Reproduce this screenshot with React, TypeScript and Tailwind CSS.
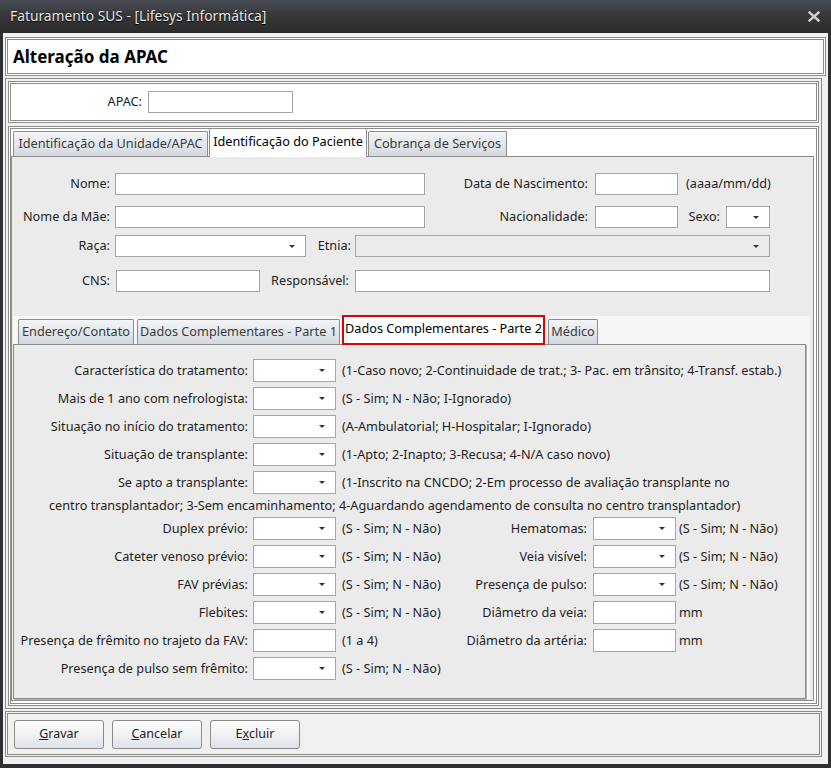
import React from "react";

const Input = ({ className = "", disabled = false }: { className?: string; disabled?: boolean }) => (
  <div className={`h-[22px] shrink-0 border border-[#a5a5a5] ${disabled ? "bg-[#ebebeb]" : "bg-white"} ${className}`} />
);

const Select = ({ className = "", disabled = false }: { className?: string; disabled?: boolean }) => (
  <div
    className={`flex h-[22px] shrink-0 items-center justify-end border border-[#a5a5a5] pr-[10px] ${
      disabled ? "bg-[#ebebeb]" : "bg-white"
    } ${className}`}
  >
    <svg width="6" height="3" viewBox="0 0 6 3">
      <path d="M0 0h6L3 3z" fill="#333" />
    </svg>
  </div>
);

const Label = ({ className = "", children }: { className?: string; children: React.ReactNode }) => (
  <span className={`shrink-0 whitespace-nowrap text-right ${className}`}>{children}</span>
);

const Btn = ({ pre, key1, post }: { pre?: string; key1: string; post: string }) => (
  <button className="flex h-[29px] w-[90px] items-center justify-center rounded-[3px] border border-[#8a8a8a] bg-[linear-gradient(to_bottom,#fdfdfd,#f1f3f5_45%,#dde3ea)] text-[12.5px] text-[#222]">
    {pre}
    <span className="underline">{key1}</span>
    {post}
  </button>
);

// linha com combo + legenda, coluna da esquerda
const Row = ({ label, desc, text = false }: { label: string; desc: string; text?: boolean }) => (
  <div className="flex h-[23px] items-center">
    <Label className="w-[234px]">{label}</Label>
    {text ? <Input className="ml-[5px] h-[23px] w-[83px]" /> : <Select className="ml-[5px] h-[23px] w-[83px]" />}
    <span className="ml-[6px] whitespace-nowrap">{desc}</span>
  </div>
);

const RowR = ({ label, desc, text = false }: { label: string; desc: string; text?: boolean }) => (
  <div className="flex h-[23px] items-center">
    <Label className="w-[137px]">{label}</Label>
    {text ? <Input className="ml-[6px] h-[23px] w-[83px]" /> : <Select className="ml-[6px] h-[23px] w-[83px]" />}
    <span className="ml-[3px] whitespace-nowrap">{desc}</span>
  </div>
);

const sn = "(S - Sim; N - Não)";

export default function App() {
  return (
    <div className="flex h-[768px] w-[831px] flex-col bg-[#2e3034] px-[3px] pb-[4px] font-['Noto_Sans',sans-serif] text-[12.7px] text-[#1e1e1e]">
      {/* barra de titulo */}
      <div className="-mx-[3px] flex h-[33px] shrink-0 items-center justify-between bg-[linear-gradient(to_bottom,#474a52_0px,#3d4047_10px,#3a3a3b_11px,#2b2b2c_100%)] pl-[10px] pr-[11px]">
        <span className="text-[13.8px] text-[#e6e6e6] [text-shadow:0_1px_1px_#000]">Faturamento SUS - [Lifesys Informática]</span>
        <svg width="12" height="11" viewBox="0 0 12 11">
          <path d="M1.5 1.5l9 8M10.5 1.5l-9 8" stroke="#d0d0d0" strokeWidth="2.4" strokeLinecap="square" />
        </svg>
      </div>

      <div className="flex flex-1 flex-col bg-[#f0f0f0] pl-[2px] pr-[2px] pt-[4px]">
        {/* cabecalho */}
        <div className="flex h-[39px] items-center border-[3px] border-double border-[#8c8c8c] bg-white pl-[5px]">
          <span className="text-[17px] font-bold text-black">Alteração da APAC</span>
        </div>

        {/* painel principal */}
        <div className="mr-[4px] mt-[2px] flex h-[631px] flex-col gap-[3px] border border-[#8c8c8c] p-[2px]">
          <div className="flex h-[42px] shrink-0 items-center border-[3px] border-double border-[#8c8c8c] bg-white">
            <Label className="w-[131px]">APAC:</Label>
            <Input className="ml-[6px] h-[21px] w-[145px]" />
          </div>

          <div className="flex flex-1 flex-col border-[3px] border-double border-[#8c8c8c] bg-white">
            {/* abas externas */}
            <div className="flex h-[27px] shrink-0 items-end pl-[2px]">
              <div className="flex h-[25px] w-[195px] items-center justify-center rounded-t-[2px] border border-b-0 border-[#8c8c8c] bg-[linear-gradient(to_bottom,#f3f5f7,#d3d9e0)] text-[#3a3a3a]">
                Identificação da Unidade/APAC
              </div>
              <div className="relative z-10 -mb-px ml-px flex h-[29px] w-[158px] items-center justify-center rounded-t-[2px] border border-b-0 border-[#8c8c8c] bg-white pb-[3px] text-black">
                Identificação do Paciente
              </div>
              <div className="ml-px flex h-[25px] w-[139px] items-center justify-center rounded-t-[2px] border border-b-0 border-[#8c8c8c] bg-[linear-gradient(to_bottom,#f3f5f7,#d3d9e0)] text-[#3a3a3a]">
                Cobrança de Serviços
              </div>
            </div>

            {/* conteudo da aba Paciente */}
            <div className="mb-[2px] mr-[2px] flex flex-1 flex-col border border-[#8c8c8c] bg-[#ebebeb] pt-[16px]">
              <div className="flex h-[22px] items-center">
                <Label className="w-[98px]">Nome:</Label>
                <Input className="ml-[5px] w-[310px]" />
                <Label className="w-[163px]">Data de Nascimento:</Label>
                <Input className="ml-[7px] w-[83px]" />
                <span className="ml-[8px]">(aaaa/mm/dd)</span>
              </div>
              <div className="mt-[11px] flex h-[22px] items-center">
                <Label className="w-[98px]">Nome da Mãe:</Label>
                <Input className="ml-[5px] w-[310px]" />
                <Label className="w-[163px]">Nacionalidade:</Label>
                <Input className="ml-[7px] w-[83px]" />
                <Label className="w-[42px]">Sexo:</Label>
                <Select className="ml-[6px] w-[44px]" />
              </div>
              <div className="mt-[7px] flex h-[22px] items-center">
                <Label className="w-[98px]">Raça:</Label>
                <Select className="ml-[5px] w-[191px]" />
                <Label className="w-[45px]">Etnia:</Label>
                <Select className="ml-[4px] w-[415px]" disabled />
              </div>
              <div className="mt-[13px] flex h-[22px] items-center">
                <Label className="w-[98px]">CNS:</Label>
                <Input className="ml-[6px] w-[144px]" />
                <Label className="w-[89px]">Responsável:</Label>
                <Input className="ml-[6px] w-[415px]" />
              </div>

              {/* abas internas */}
              <div className="mb-px ml-px mr-[3px] mt-[24px] flex flex-1 flex-col bg-[#f6f6f6]">
                <div className="flex h-[28px] shrink-0 items-end pl-[5px]">
                  <div className="flex h-[25px] w-[116px] items-center justify-center rounded-t-[2px] border border-b-0 border-[#8c8c8c] bg-[linear-gradient(to_bottom,#f3f5f7,#d3d9e0)] text-[#3a3a3a]">
                    Endereço/Contato
                  </div>
                  <div className="ml-[3px] flex h-[25px] w-[203px] items-center justify-center rounded-t-[2px] border border-b-0 border-[#8c8c8c] bg-[linear-gradient(to_bottom,#f3f5f7,#d3d9e0)] text-[#3a3a3a]">
                    Dados Complementares - Parte 1
                  </div>
                  <div className="relative z-10 -mb-px ml-[2px] flex h-[30px] w-[203px] items-center justify-center border-2 border-[#e00000] bg-white pb-[2px] text-black">
                    Dados Complementares - Parte 2
                  </div>
                  <div className="ml-[3px] flex h-[25px] w-[50px] items-center justify-center rounded-t-[2px] border border-b-0 border-[#8c8c8c] bg-[linear-gradient(to_bottom,#f3f5f7,#d3d9e0)] text-[#3a3a3a]">
                    Médico
                  </div>
                </div>

                <div className="mr-[4px] flex flex-1 flex-col gap-[5px] border border-[#8c8c8c] bg-[#ebebeb] pt-[14px] shadow-[1px_1px_0_#b5b5b5]">
                  <Row
                    label="Característica do tratamento:"
                    desc="(1-Caso novo; 2-Continuidade de trat.; 3- Pac. em trânsito; 4-Transf. estab.)"
                  />
                  <Row label="Mais de 1 ano com nefrologista:" desc="(S - Sim; N - Não; I-Ignorado)" />
                  <Row label="Situação no início do tratamento:" desc="(A-Ambulatorial; H-Hospitalar; I-Ignorado)" />
                  <Row label="Situação de transplante:" desc="(1-Apto; 2-Inapto; 3-Recusa; 4-N/A caso novo)" />
                  <Row
                    label="Se apto a transplante:"
                    desc="(1-Inscrito na CNCDO; 2-Em processo de avaliação transplante no"
                  />
                  <div className="h-[13px] whitespace-nowrap pl-[35px] leading-[13px]">
                    centro transplantador; 3-Sem encaminhamento; 4-Aguardando agendamento de consulta no centro transplantador)
                  </div>
                  <div className="flex">
                    <div className="flex w-[436px] flex-col gap-[5px]">
                      <Row label="Duplex prévio:" desc={sn} />
                      <Row label="Cateter venoso prévio:" desc={sn} />
                      <Row label="FAV prévias:" desc={sn} />
                      <Row label="Flebites:" desc={sn} />
                      <Row label="Presença de frêmito no trajeto da FAV:" desc="(1 a 4)" text />
                      <Row label="Presença de pulso sem frêmito:" desc={sn} />
                    </div>
                    <div className="flex flex-col gap-[5px]">
                      <RowR label="Hematomas:" desc={sn} />
                      <RowR label="Veia visível:" desc={sn} />
                      <RowR label="Presença de pulso:" desc={sn} />
                      <RowR label="Diâmetro da veia:" desc="mm" text />
                      <RowR label="Diâmetro da artéria:" desc="mm" text />
                    </div>
                  </div>
                </div>
              </div>
            </div>
          </div>
        </div>

        {/* botoes */}
        <div className="mr-[4px] mt-[2px] flex h-[46px] items-center gap-[8px] border-[3px] border-double border-[#8c8c8c] pl-[6px]">
          <Btn key1="G" post="ravar" />
          <Btn key1="C" post="ancelar" />
          <Btn pre="E" key1="x" post="cluir" />
        </div>
      </div>
    </div>
  );
}
